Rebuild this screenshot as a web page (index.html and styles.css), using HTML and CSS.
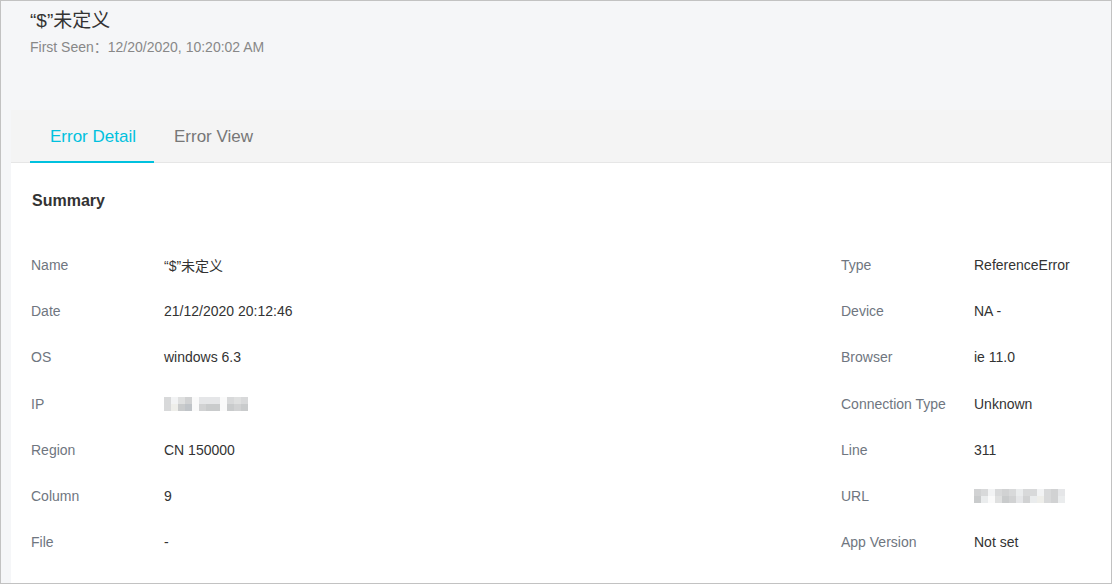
FILE: index.html
```html
<!DOCTYPE html>
<html>
<head>
<meta charset="utf-8">
<link rel="stylesheet" href="styles.css">
</head>
<body>
<div class="frame">
  <div class="header">
    <div class="title">“$”未定义</div>
    <div class="seen">First Seen：12/20/2020, 10:20:02 AM</div>
  </div>
  <div class="card">
    <div class="tabs">
      <div class="tab active">Error Detail</div>
      <div class="tab">Error View</div>
    </div>
    <div class="body">
      <div class="summary">Summary</div>
      <div class="grid">
        <div class="label">Name</div><div class="value">“$”未定义</div>
        <div class="label">Type</div><div class="value">ReferenceError</div>

        <div class="label">Date</div><div class="value">21/12/2020 20:12:46</div>
        <div class="label">Device</div><div class="value">NA -</div>

        <div class="label">OS</div><div class="value">windows 6.3</div>
        <div class="label">Browser</div><div class="value">ie 11.0</div>

        <div class="label">IP</div>
        <div class="value"><div class="mosaic ip">
          <i class="s3"></i><i class="s8"></i><i class="s4"></i><i class="s2"></i><i class="s9"></i><i class="s5"></i><i class="s5"></i><i class="s5"></i><i class="s9"></i><i class="s3"></i><i class="s4"></i><i class="s3"></i>
          <i class="s3"></i><i class="s7"></i><i class="s1"></i><i class="s0"></i><i class="s9"></i><i class="s2"></i><i class="s1"></i><i class="s1"></i><i class="s9"></i><i class="s1"></i><i class="s2"></i><i class="s1"></i>
        </div></div>
        <div class="label">Connection Type</div><div class="value">Unknown</div>

        <div class="label">Region</div><div class="value">CN 150000</div>
        <div class="label">Line</div><div class="value">311</div>

        <div class="label">Column</div><div class="value">9</div>
        <div class="label">URL</div>
        <div class="value"><div class="mosaic url">
          <i class="s2"></i><i class="s3"></i><i class="s8"></i><i class="s3"></i><i class="s2"></i><i class="s3"></i><i class="s6"></i><i class="s3"></i><i class="s3"></i><i class="s8"></i><i class="s3"></i><i class="s2"></i><i class="s5"></i>
          <i class="s1"></i><i class="s6"></i><i class="s9"></i><i class="s4"></i><i class="s1"></i><i class="s2"></i><i class="s5"></i><i class="s2"></i><i class="s6"></i><i class="s7"></i><i class="s3"></i><i class="s2"></i><i class="s6"></i>
        </div></div>

        <div class="label">File</div><div class="value">-</div>
        <div class="label">App Version</div><div class="value">Not set</div>
      </div>
    </div>
  </div>
</div>
</body>
</html>
```

FILE: styles.css
```css
html, body {
  margin: 0;
  padding: 0;
}
body {
  font-family: "Liberation Sans", Arial, "Noto Sans CJK SC", sans-serif;
  color: #333;
}
.frame {
  width: 1112px;
  height: 584px;
  box-sizing: border-box;
  border: 1px solid #c2c2c2;
  background: #f5f6f8;
  overflow: hidden;
}
.header {
  padding: 8px 0 0 29px;
  height: 47px;
}
.title {
  font-size: 19px;
  line-height: 24px;
  color: #333;
}
.seen {
  margin-top: 4px;
  font-size: 14px;
  line-height: 20px;
  color: #888;
}
.card {
  margin: 54px 0 0 10px;
  background: #fff;
  height: 473px;
}
.tabs {
  display: flex;
  height: 52px;
  padding-left: 19px;
  background: #f4f4f4;
  border-bottom: 1px solid #e6e6e6;
}
.tab {
  box-sizing: border-box;
  height: 53px;
  margin-bottom: -1px;
  padding: 2px 18px 0 20px;
  font-size: 17px;
  line-height: 50px;
  color: #777;
}
.tab.active {
  color: #00c1de;
  border-bottom: 2px solid #00c1de;
}
.body {
  padding: 27px 0 0 20px;
}
.summary {
  font-size: 16px;
  font-weight: bold;
  line-height: 22px;
  color: #333;
  margin-left: 1px;
}
.grid {
  margin-top: 30px;
  display: grid;
  grid-template-columns: 133px 677px 133px 1fr;
  grid-auto-rows: 46.17px;
  align-items: center;
}
.label {
  font-size: 14px;
  color: #6f7680;
}
.value {
  font-size: 14px;
  color: #333;
}
.mosaic {
  display: grid;
  grid-auto-rows: 7px;
}
.mosaic.ip {
  grid-template-columns: repeat(12, 7px);
}
.mosaic.url {
  grid-template-columns: repeat(13, 7px);
}
.mosaic i { display: block; }
.s0 { background: #c0c4c8; }
.s1 { background: #c9cbcc; }
.s2 { background: #d1d2d3; }
.s3 { background: #d8d9da; }
.s4 { background: #dfe0e0; }
.s5 { background: #e5e6e8; }
.s6 { background: #eaeced; }
.s7 { background: #eeeeea; }
.s8 { background: #f2f3f4; }
.s9 { background: #fafafa; }
```
